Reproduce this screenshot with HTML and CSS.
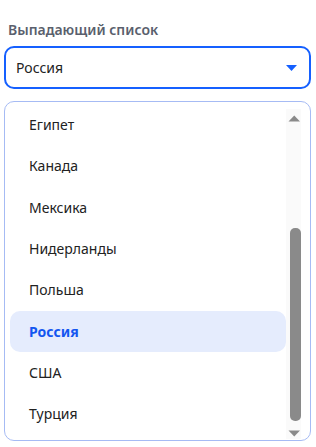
FILE: index.html
```html
<!DOCTYPE html>
<html lang="ru">
<head>
<meta charset="utf-8">
<link rel="stylesheet" href="styles.css">
</head>
<body>
<div class="wrap">
  <div class="label">Выпадающий список</div>
  <div class="select">
    <span class="value">Россия</span>
    <svg class="caret" width="11" height="6" viewBox="0 0 11 6"><path d="M0 0H11L5.5 6Z" fill="#1560ff"/></svg>
  </div>
  <div class="listbox">
    <div class="viewport" id="scroll">
      <div class="item">Австралия</div>
      <div class="item">Аргентина</div>
      <div class="item">Бразилия</div>
      <div class="item">Германия</div>
      <div class="item">Египет</div>
      <div class="item">Канада</div>
      <div class="item">Мексика</div>
      <div class="item">Нидерланды</div>
      <div class="item">Польша</div>
      <div class="item selected">Россия</div>
      <div class="item">США</div>
      <div class="item">Турция</div>
    </div>
    <div class="scrollbar">
      <svg class="sb-btn" width="15" height="15" viewBox="0 0 15 15"><path d="M2.5 12.5H14L8.25 6.5Z" fill="#8a8a8a"/></svg>
      <div class="sb-track"><div class="sb-thumb"></div></div>
      <svg class="sb-btn" width="15" height="15" viewBox="0 0 15 15"><path d="M2.5 6.5H14L8.25 12.5Z" fill="#8a8a8a"/></svg>
    </div>
  </div>
</div>
<script src="script.js"></script>
</body>
</html>
```
FILE: styles.css
```css
html, body {
  margin: 0;
  padding: 0;
  background: #ffffff;
}
body {
  font-family: "Noto Sans", "Open Sans", sans-serif;
  color: #222222;
}
.wrap {
  padding: 21px 5px 0 4px;
}
.label {
  margin: 0 0 7px 4px;
  font-size: 14px;
  line-height: 18px;
  font-weight: 600;
  color: #5a5f6d;
}
.select {
  box-sizing: border-box;
  width: 307px;
  height: 43px;
  border: 2px solid #1560ff;
  border-radius: 10px;
  padding: 0 12px 0 10px;
  display: flex;
  align-items: center;
  justify-content: space-between;
  font-size: 14px;
}
.caret {
  display: block;
  margin-top: 1px;
}
.listbox {
  box-sizing: border-box;
  width: 307px;
  height: 340px;
  margin-top: 12px;
  border: 1px solid #a6bbf4;
  border-radius: 10px;
  padding: 7px 9px 1px 0;
  display: flex;
  overflow: hidden;
}
.viewport {
  box-sizing: border-box;
  flex: 1;
  height: 100%;
  overflow-y: scroll;
  scrollbar-width: none;
  padding: 4px 0 4px 5px;
}
.viewport::-webkit-scrollbar {
  display: none;
}
.item {
  box-sizing: border-box;
  height: 41.4px;
  display: flex;
  align-items: center;
  padding-left: 19px;
  font-size: 14px;
  border-radius: 10px;
}
.item.selected {
  background: #e5ecfd;
  color: #1356f0;
  font-weight: 700;
}
.scrollbar {
  width: 15px;
  height: 100%;
  background: #fafafa;
  display: flex;
  flex-direction: column;
}
.sb-btn {
  display: block;
  flex: none;
}
.sb-track {
  flex: 1;
  padding-top: 104px;
  padding-left: 4px;
}
.sb-thumb {
  width: 11px;
  height: 193px;
  border-radius: 5px;
  background: #8a8a8a;
}
```
FILE: script.js
```js
var s = document.getElementById('scroll');
s.scrollTop = s.scrollHeight;
```
